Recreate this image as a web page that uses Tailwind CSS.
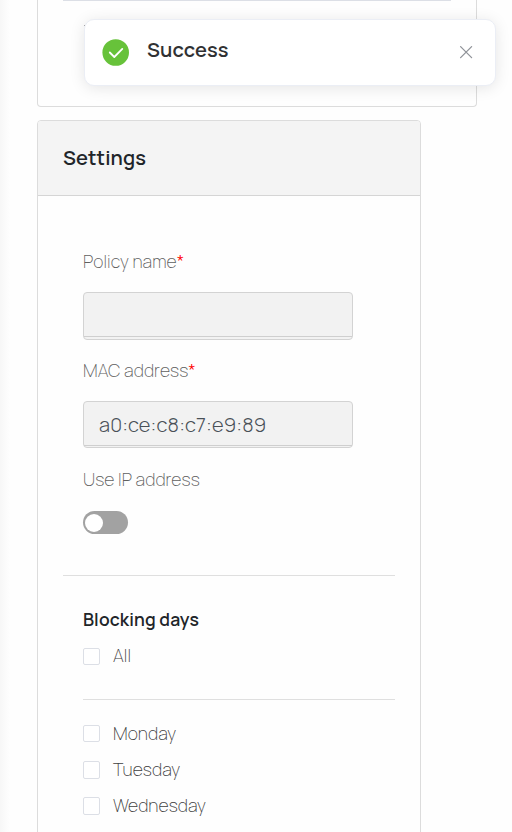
<!DOCTYPE html>
<html lang="en">
<head>
<meta charset="utf-8">
<title>Settings</title>
<script src="https://cdn.jsdelivr.net/npm/@tailwindcss/browser@4"></script>
</head>
<body class="relative h-[832px] overflow-hidden bg-[#fefefe] pl-[37px] font-['Manrope','Inter',sans-serif] text-[17.6px] font-extralight tracking-[0.07px] text-[#606060]">
<div class="absolute inset-y-0 left-0 w-2.5 bg-linear-to-r from-[#f7f7f7] to-[#fefefe]"></div>
<section class="h-[107px] w-[440px] rounded-b-[4px] border border-t-0 border-[#dcdcdc] px-[25px]">
  <div class="h-px bg-[#dcdfe6]"></div>
  <div class="mt-6 ml-[21px] h-px w-px bg-[#888888]"></div>
</section>
<main class="mt-[13px] h-[730px] w-[384px] rounded-t-[4px] border border-[#dcdcdc]">
  <header class="flex h-[75px] items-center rounded-t-[3px] border-b border-[#d5d5d5] bg-[#f4f4f4] px-[25px]">
    <h1 class="text-[20px] leading-6 font-semibold tracking-[0.12px] text-[#212529]"><span>Settings</span></h1>
  </header>
  <div class="px-[25px]">
    <form class="flex h-[380px] flex-col border-b border-[#dfdfdf] pt-[53px] pl-5">
      <label class="h-6 leading-6"><span>Policy name</span><span class="font-light text-[#ff0000]">*</span></label>
      <div class="mt-[19px] h-12 w-[270px] rounded-[4px] border border-[#d3d3d3] bg-[#f2f2f2]"><div class="h-11 border-b border-[#cfcfcf]"></div></div>
      <label class="mt-[18px] h-6 leading-6"><span>MAC address</span><span class="font-light text-[#ff0000]">*</span></label>
      <div class="mt-[19px] h-[47px] w-[270px] rounded-[4px] border border-[#d3d3d3] bg-[#f2f2f2]"><div class="flex h-11 items-center border-b border-[#cfcfcf] px-[15px] pt-[2px] text-[20px] font-light tracking-[0.17px] text-[#495057]"><span>a0:ce:c8:c7:e9:89</span></div></div>
      <label class="mt-[19px] h-6 leading-6"><span>Use IP address</span></label>
      <div class="mt-5 flex h-[23px] w-[45px] items-center rounded-full bg-[#a2a2a2] pl-[2px]"><div class="size-[18px] rounded-full bg-white"></div></div>
    </form>
    <section class="pt-[31px] pl-5">
      <h2 class="h-6 leading-6 font-semibold tracking-[0.12px] text-[#212529]"><span>Blocking days</span></h2>
      <div class="mt-[13px] flex h-6 items-center gap-[13px] text-[#404040]"><i class="size-[17px] rounded-[2px] border border-[#dcdfe6] bg-white"></i><span class="pb-[2px]">All</span></div>
      <div class="mt-[31px] flex flex-col gap-3 border-t border-[#dfdfdf] pt-[22px] text-[#404040]">
        <div class="flex h-6 items-center gap-[13px]"><i class="mb-px size-[17px] rounded-[2px] border border-[#dcdfe6] bg-white"></i><span class="pb-[2px]">Monday</span></div>
        <div class="flex h-6 items-center gap-[13px]"><i class="h-[18px] w-[17px] rounded-[2px] border border-[#dcdfe6] bg-white"></i><span class="pb-[2px]">Tuesday</span></div>
        <div class="flex h-6 items-center gap-[13px]"><i class="h-[18px] w-[17px] rounded-[2px] border border-[#dcdfe6] bg-white"></i><span class="pb-[2px]">Wednesday</span></div>
      </div>
    </section>
  </div>
</main>
<aside class="absolute top-[19px] left-[84px] flex h-[67px] w-[412px] items-center rounded-[10px] border border-[#ebeef5] bg-white pr-[22px] pl-[17px] shadow-[0_2px_15px_rgba(0,0,0,0.1)]">
  <svg class="size-[27px]" viewBox="0 0 27 27" fill="none"><circle cx="13.7" cy="13.5" r="13.3" fill="#67c23a"/><path d="M7.8 13.5l4.5 4.5 8-8.1" stroke="white" stroke-width="1.8" stroke-linecap="round" stroke-linejoin="round"/></svg>
  <h3 class="mb-[6px] ml-[18px] text-[20px] leading-6 font-semibold tracking-[0.15px] text-[#303133]"><span>Success</span></h3>
  <svg class="mb-px ml-auto size-[14px]" viewBox="0 0 14 14" fill="none" stroke="#909399" stroke-width="1.3" stroke-linecap="round"><path d="M1.6 1.6l11 11M12.6 1.6l-11 11"/></svg>
</aside>
</body>
</html>
